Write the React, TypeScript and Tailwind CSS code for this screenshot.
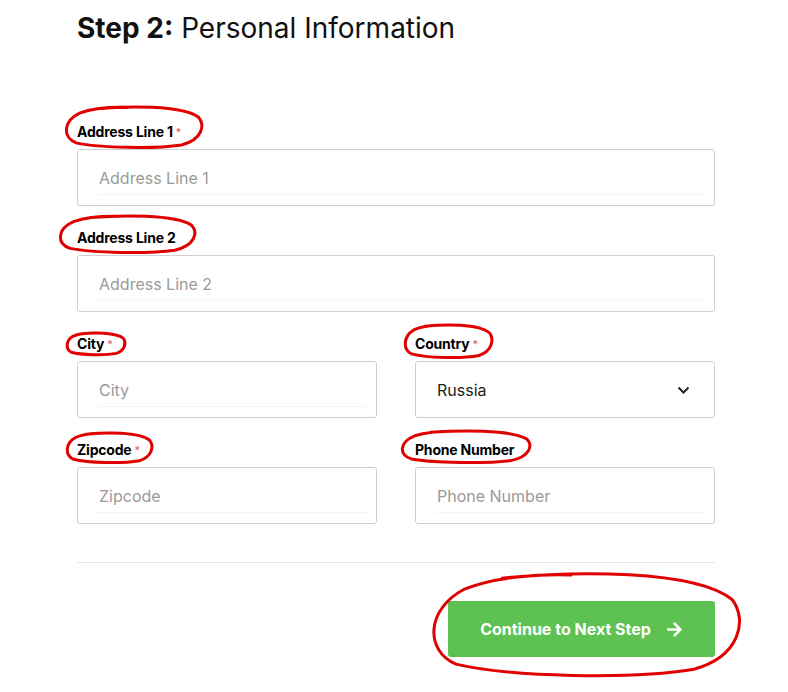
import React from "react";
import { FaArrowRight } from "react-icons/fa";

const Field = ({ label, placeholder, required }: { label: string; placeholder: string; required?: boolean }) => (
	<div className="flex flex-col">
		<label className="text-[14px] font-bold text-black leading-[18px] h-[18px] pt-px tracking-[-0.2px]">
			{label}
			{required && <span className="text-[#e05a5a] font-normal text-[11px] align-top ml-[3px]">*</span>}
		</label>
		<div className="relative mt-[9px] h-[57px] rounded-[3px] border border-[#cfcfcf] bg-white flex items-center px-[21px]">
			<input
				className="w-full text-[16px] text-[#333] placeholder:text-[#9a9a9a] outline-none bg-transparent"
				placeholder={placeholder}
			/>
			<div className="absolute left-[20px] right-[10px] bottom-[10px] h-px bg-[#f4f4f4]" />
		</div>
	</div>
);

const CountrySelect = () => (
	<div className="flex flex-col">
		<label className="text-[14px] font-bold text-black leading-[18px] h-[18px] pt-px tracking-[-0.2px]">
			Country
			<span className="text-[#e05a5a] font-normal text-[11px] align-top ml-[3px]">*</span>
		</label>
		<div className="mt-[9px] h-[57px] rounded-[3px] border border-[#cfcfcf] bg-white flex items-center justify-between pl-[21px] pr-[24px]">
			<span className="text-[16px] text-[#222]">Russia</span>
			<svg width="13" height="8" viewBox="0 0 13 8" fill="none">
				<path d="M1.5 1.5 L6.5 6.5 L11.5 1.5" stroke="#222" strokeWidth="2" />
			</svg>
		</div>
	</div>
);

const Scribble = ({ x, y, w, h }: { x: number; y: number; w: number; h: number }) => {
	const cx = x + w / 2;
	const cy = y + h / 2;
	const rx = w / 2;
	const ry = h / 2;
	const d = `M ${cx - rx * 0.55} ${cy - ry * 0.92}
		C ${cx - rx * 0.1} ${cy - ry * 1.05}, ${cx + rx * 0.7} ${cy - ry * 1.1}, ${cx + rx * 0.95} ${cy - ry * 0.5}
		C ${cx + rx * 1.05} ${cy - ry * 0.1}, ${cx + rx * 1.0} ${cy + ry * 0.6}, ${cx + rx * 0.7} ${cy + ry * 0.85}
		C ${cx + rx * 0.3} ${cy + ry * 1.05}, ${cx - rx * 0.5} ${cy + ry * 1.0}, ${cx - rx * 0.85} ${cy + ry * 0.75}
		C ${cx - rx * 1.05} ${cy + ry * 0.5}, ${cx - rx * 1.05} ${cy - ry * 0.3}, ${cx - rx * 0.8} ${cy - ry * 0.7}
		C ${cx - rx * 0.6} ${cy - ry * 0.95}, ${cx - rx * 0.3} ${cy - ry * 1.0}, ${cx - rx * 0.1} ${cy - ry * 0.98}`;
	return <path d={d} fill="none" stroke="#e00000" strokeWidth="3" strokeLinecap="round" />;
};

const App = () => {
	return (
		<div className="relative w-[788px] h-[692px] bg-white overflow-hidden font-['Inter',sans-serif]">
			<div className="w-[638px] ml-[77px] pt-[10px]">
				<h2 className="text-[28px] leading-[36px] text-[#111]">
					<span className="font-bold">Step 2:</span> Personal Information
				</h2>

				<div className="mt-[76px] flex flex-col gap-[22px]">
					<Field label="Address Line 1" placeholder="Address Line 1" required />
					<Field label="Address Line 2" placeholder="Address Line 2" />
					<div className="grid grid-cols-2 gap-x-[38px] gap-y-[22px]">
						<Field label="City" placeholder="City" required />
						<CountrySelect />
						<Field label="Zipcode" placeholder="Zipcode" required />
						<Field label="Phone Number" placeholder="Phone Number" />
					</div>
				</div>

				<div className="mt-[38px] h-px bg-[#e6e6e6]" />

				<div className="flex justify-end mt-[38px]">
					<button className="w-[267px] h-[56px] rounded-[3px] bg-[#5dc252] text-white text-[16px] font-bold flex items-center justify-center gap-[15px]">
						Continue to Next Step
						<FaArrowRight className="text-[17px]" />
					</button>
				</div>
			</div>

			<svg className="absolute inset-0 pointer-events-none" width="788" height="692">
				<Scribble x={66} y={107} w={136} h={41} />
				<Scribble x={60} y={216} w={135} h={37} />
				<Scribble x={67} y={333} w={58} h={22} />
				<Scribble x={405} y={325} w={87} h={33} />
				<Scribble x={67} y={433} w={85} h={30} />
				<Scribble x={402} y={431} w={128} h={32} />
				<Scribble x={433} y={574} w={307} h={103} />
			</svg>
		</div>
	);
};

export default App;
